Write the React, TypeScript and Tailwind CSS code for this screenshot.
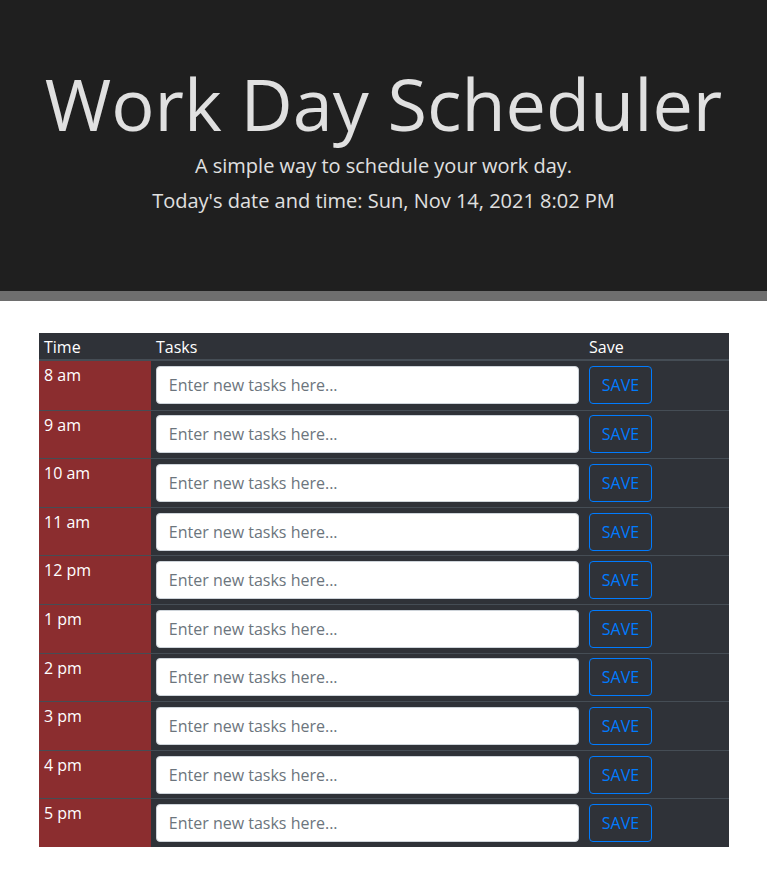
const HOURS = ['8 am', '9 am', '10 am', '11 am', '12 pm', '1 pm', '2 pm', '3 pm', '4 pm', '5 pm']

export default function App() {
  return (
    <div className="min-h-[871px] bg-white font-['Open_Sans',sans-serif] text-white">
      <header className="flex h-[301px] flex-col items-center border-b-[10px] border-[#6e6e6e] bg-[#1f1f1f] pt-[60px] text-[#e0e0e0]">
        <h1 className="text-[72px] leading-[1.2] font-normal">Work Day Scheduler</h1>
        <p className="mt-[5px] text-[20px] leading-[30px] font-normal">A simple way to schedule your work day.</p>
        <p className="mt-[5px] text-[20px] leading-[30px] font-normal">Today's date and time: Sun, Nov 14, 2021 8:02 PM</p>
      </header>

      <div className="mt-8 ml-[39px] w-[690px] bg-[#2f3238]">
        <div className="grid h-[28px] grid-cols-[112px_433px_145px] items-end border-b-2 border-[#454d55] text-[16px] leading-6">
          <div className="px-[5px]">Time</div>
          <div className="px-[5px]">Tasks</div>
          <div className="px-[5px]">Save</div>
        </div>
        {HOURS.map((h, i) => (
          <div
            key={h}
            className={`grid h-[48.6px] grid-cols-[112px_433px_145px] ${i > 0 ? 'border-t border-[#454d55]' : ''}`}
          >
            <div className="bg-[#8b2d2f] px-[5px] pt-[2px] text-[16px] leading-6">{h}</div>
            <div className="p-[4.8px]">
              <input
                type="text"
                placeholder="Enter new tasks here..."
                className="h-[38px] w-full rounded border border-[#ced4da] bg-white px-3 text-[16px] text-[#495057] placeholder:text-[#6c757d] outline-none"
              />
            </div>
            <div className="p-[4.8px]">
              <button className="h-[38px] rounded border border-[#007bff] px-3 text-[16px] text-[#007bff]">
                SAVE
              </button>
            </div>
          </div>
        ))}
      </div>
    </div>
  )
}
